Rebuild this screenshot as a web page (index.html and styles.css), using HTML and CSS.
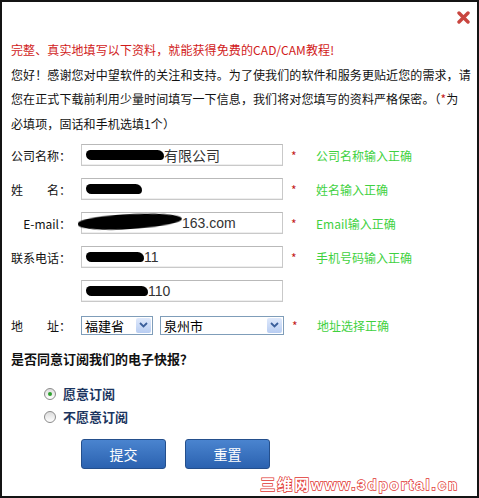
FILE: index.html
```html
<!DOCTYPE html>
<html lang="zh-CN">
<head>
    <meta charset="UTF-8">
    <title>免费CAD/CAM教程</title>
    <link rel="stylesheet" href="styles.css">
</head>
<body>
    <div class="frame">
        <div class="close-row">
            <svg class="close" width="13" height="13" viewBox="0 0 13 13">
                <path d="M2 2 L11 11 M11 2 L2 11" stroke="#c9453f" stroke-width="3.4" stroke-linecap="round"/>
            </svg>
        </div>

        <div class="intro">
            <p class="title">完整、真实地填写以下资料，就能获得免费的CAD/CAM教程!</p>
            <p>您好！感谢您对中望软件的关注和支持。为了使我们的软件和服务更贴近您的需求，请<br>您在正式下载前利用少量时间填写一下信息，我们将对您填写的资料严格保密。（<span class="star">*</span>为<br>必填项，固话和手机选填1个）</p>
        </div>

        <div class="form">
            <div class="row">
                <span class="label">公司名称：</span>
                <div class="field"><span class="blot" style="width:78px"></span>有限公司</div>
                <span class="star">*</span>
                <span class="ok">公司名称输入正确</span>
            </div>
            <div class="row">
                <span class="label">姓　　名：</span>
                <div class="field"><span class="blot" style="width:56px"></span></div>
                <span class="star">*</span>
                <span class="ok">姓名输入正确</span>
            </div>
            <div class="row">
                <span class="label">E-mail：</span>
                <div class="field"><span class="blot big" style="width:104px"></span>163.com</div>
                <span class="star">*</span>
                <span class="ok">Email输入正确</span>
            </div>
            <div class="row">
                <span class="label">联系电话：</span>
                <div class="field"><span class="blot" style="width:58px"></span>11</div>
                <span class="star">*</span>
                <span class="ok">手机号码输入正确</span>
            </div>
            <div class="row">
                <span class="label"></span>
                <div class="field"><span class="blot" style="width:62px"></span>110</div>
            </div>
            <div class="row">
                <span class="label">地　　址：</span>
                <div class="select short">福建省<span class="drop"><svg width="9" height="6" viewBox="0 0 9 6"><path d="M1 1 L4.5 4.5 L8 1" fill="none" stroke="#3b5f9a" stroke-width="1.8"/></svg></span></div>
                <div class="select long">泉州市<span class="drop"><svg width="9" height="6" viewBox="0 0 9 6"><path d="M1 1 L4.5 4.5 L8 1" fill="none" stroke="#3b5f9a" stroke-width="1.8"/></svg></span></div>
                <span class="star">*</span>
                <span class="ok">地址选择正确</span>
            </div>
        </div>

        <p class="question">是否同意订阅我们的电子快报？</p>

        <div class="choices">
            <div class="choice"><span class="radio checked"></span>愿意订阅</div>
            <div class="choice"><span class="radio"></span>不愿意订阅</div>
        </div>

        <div class="buttons">
            <button>提交</button>
            <button>重置</button>
        </div>

        <div class="watermark">三维网www.3dportal.cn</div>
    </div>
</body>
</html>
```

FILE: styles.css
```css
body {
    margin: 0;
    font-family: "Noto Sans CJK SC", "Liberation Sans", sans-serif;
    font-size: 12px;
    color: #111;
    background: #fff;
}
.frame {
    position: relative;
    box-sizing: border-box;
    width: 479px;
    height: 498px;
    border: 2px solid #141414;
    padding: 0 6px 0 9px;
}
.close-row {
    height: 36px;
    text-align: right;
}
.close {
    margin-top: 9px;
    margin-right: 1px;
}
.intro p {
    margin: 0;
    line-height: 24.5px;
    letter-spacing: 0.1px;
    white-space: nowrap;
}
.intro .title {
    color: #d11a1a;
}
.star {
    color: #c41c1c;
}
.form {
    margin-top: 2px;
}
.row {
    display: flex;
    align-items: center;
    height: 34px;
}
.label {
    width: 60px;
    margin-right: 10px;
    text-align: right;
    white-space: nowrap;
}
.field {
    box-sizing: border-box;
    width: 202px;
    height: 22px;
    border: 1px solid #c9c9c9;
    border-top-color: #b9b9b9;
    box-shadow: inset 0 -1px 0 #eee;
    padding-left: 4px;
    display: flex;
    align-items: center;
    font-family: "Liberation Sans", "Noto Sans CJK SC", sans-serif;
    font-size: 14px;
    color: #333;
}
.blot {
    display: inline-block;
    height: 10px;
    background: #000;
    border-radius: 5px 7px 4px 6px;
    filter: blur(0.7px);
}
.blot.big {
    height: 15px;
    margin-left: -8px;
    margin-top: -4px;
    border-radius: 40% 60% 45% 55%;
    transform: rotate(-4deg);
}
.row .star {
    margin-left: 8px;
    width: 25px;
}
.ok {
    color: #3fd13f;
}
.select {
    box-sizing: border-box;
    height: 19px;
    border: 1px solid #7f9db9;
    display: flex;
    align-items: center;
    justify-content: space-between;
    padding-left: 3px;
    font-size: 13px;
    color: #000;
    margin-right: 7px;
}
.select.short {
    width: 72px;
}
.select.long {
    width: 124px;
    margin-right: 0;
}
.drop {
    width: 15px;
    height: 15px;
    margin-right: 1px;
    background: linear-gradient(#dfe9fb, #b8cdf2);
    border-radius: 2px;
    display: flex;
    align-items: center;
    justify-content: center;
}
.question {
    margin: 0;
    line-height: 34px;
    font-size: 13px;
    font-weight: bold;
}
.choices {
    margin-top: 6px;
    padding-left: 33px;
}
.choice {
    display: flex;
    align-items: center;
    height: 23px;
    font-size: 13px;
    font-weight: bold;
    color: #1b3560;
}
.radio {
    box-sizing: border-box;
    width: 12px;
    height: 12px;
    border: 1px solid #8b8b8b;
    border-radius: 50%;
    background: linear-gradient(#dcdcdc, #fff);
    margin-right: 7px;
    display: flex;
    align-items: center;
    justify-content: center;
}
.radio.checked::after {
    content: "";
    width: 4px;
    height: 4px;
    border-radius: 50%;
    background: #2fa12f;
}
.buttons {
    display: flex;
    gap: 19px;
    margin-top: 11px;
    padding-left: 70px;
}
button {
    width: 85px;
    height: 30px;
    border: 1px solid #244f8c;
    border-radius: 3px;
    background: linear-gradient(#4a84cf, #2b62b0);
    color: #fff;
    font-family: "Noto Sans CJK SC", sans-serif;
    font-size: 14px;
    cursor: pointer;
}
.watermark {
    position: absolute;
    right: 18px;
    bottom: 2px;
    font-family: "Liberation Sans", "Noto Sans CJK SC", sans-serif;
    font-size: 15px;
    font-weight: bold;
    color: #fff;
    -webkit-text-stroke: 1.4px #e0342f;
    paint-order: stroke;
    letter-spacing: 1.9px;
}
```
